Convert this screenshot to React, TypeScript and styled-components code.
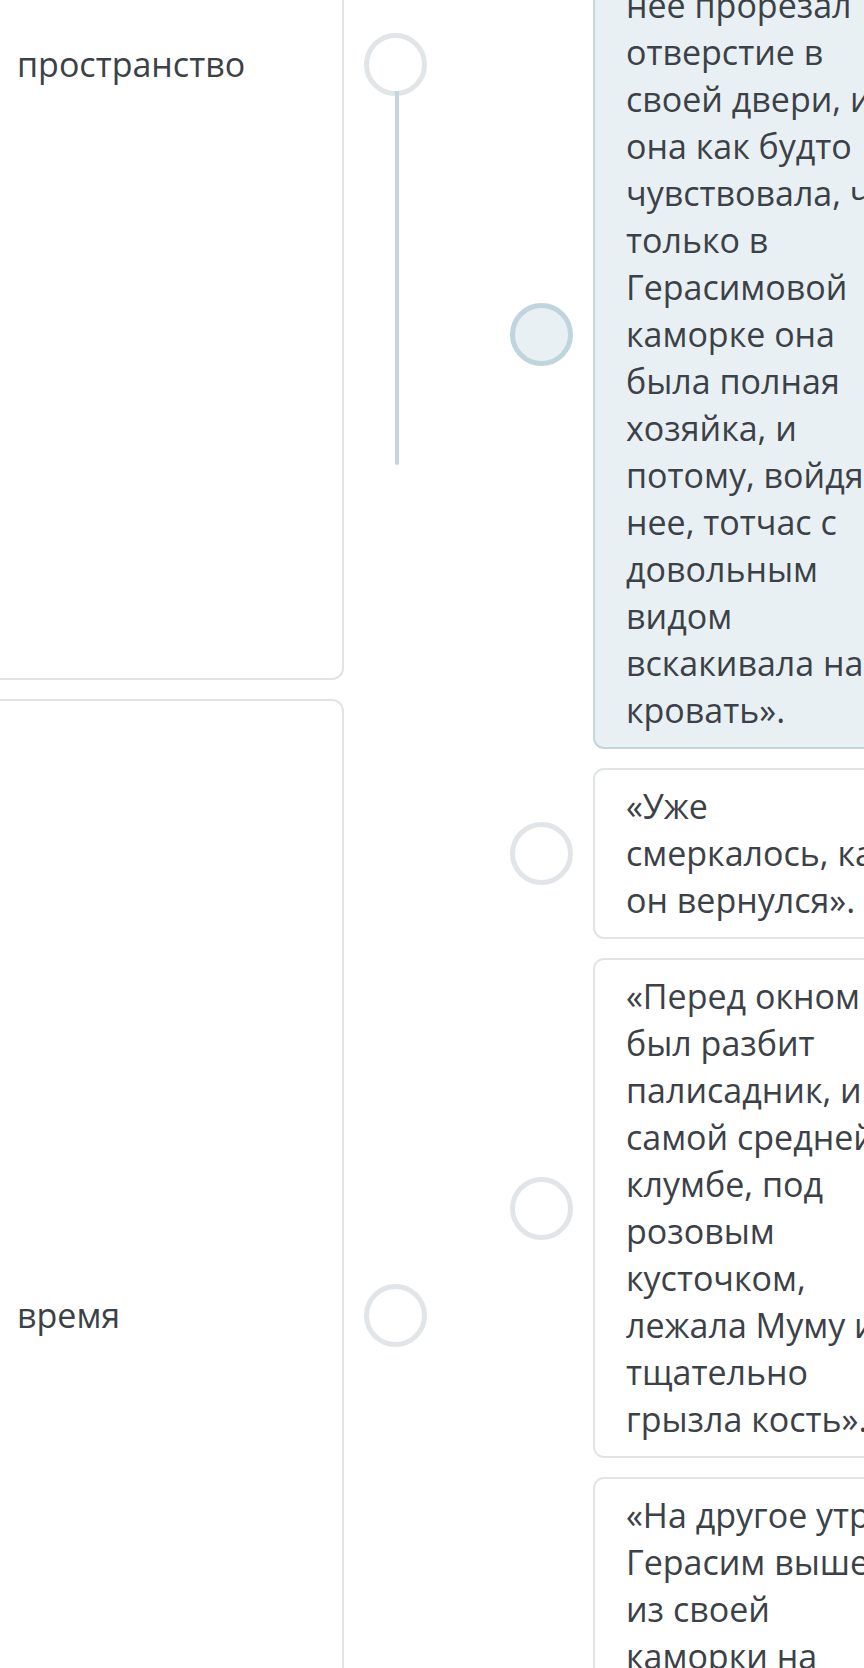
import styled, { createGlobalStyle } from 'styled-components';

const GlobalStyle = createGlobalStyle`
  html, body {
    margin: 0;
    padding: 0;
    background: #ffffff;
    overflow: hidden;
  }
  body {
    width: 864px;
    height: 1668px;
    font-family: 'Open Sans', 'Noto Sans', sans-serif;
    color: #3b4147;
  }
`;

const Viewport = styled.div`
  width: 864px;
  height: 1668px;
  overflow: hidden;
`;

// the exercise is scrolled, so the board starts above the visible area
const Board = styled.div`
  display: flex;
  align-items: flex-start;
  margin-top: -552px;
  margin-left: -16px;
  gap: 83px;
`;

const Side = styled.div<{ $offset?: number }>`
  display: flex;
  flex-direction: column;
  gap: 19px;
  padding-top: ${(p) => p.$offset || 0}px;
  flex-shrink: 0;
`;

const Row = styled.div`
  display: flex;
  align-items: center;
  gap: 20px;
`;

const LabelCard = styled.div`
  box-sizing: border-box;
  width: 360px;
  min-height: 1232px;
  display: flex;
  align-items: center;
  padding: 0 20px 0 31px;
  border: 2px solid #e0e4e7;
  border-radius: 12px;
  background: #fff;
  font-size: 34px;
  line-height: 47px;
`;

const AnswerCard = styled.div<{ $active?: boolean }>`
  box-sizing: border-box;
  width: 460px;
  padding: 13px 20px 13px 31px;
  border: 2px solid ${(p) => (p.$active ? '#c3d5de' : '#e2e5e8')};
  border-radius: 11px;
  background: ${(p) => (p.$active ? '#e9f0f4' : '#ffffff')};
  font-size: 34px;
  line-height: 47px;
  white-space: nowrap;
`;

const Dot = styled.div<{ $active?: boolean }>`
  position: relative;
  box-sizing: border-box;
  width: 63px;
  height: 63px;
  flex-shrink: 0;
  border-radius: 50%;
  border: 5px solid ${(p) => (p.$active ? '#c0d4dd' : '#e1e5e8')};
  background: ${(p) => (p.$active ? '#e9f0f4' : '#ffffff')};
`;

// connection line being dragged out of a dot
const Wire = styled.div<{ $length: number }>`
  position: absolute;
  top: 100%;
  left: 50%;
  width: 4px;
  margin-left: -1px;
  height: ${(p) => p.$length}px;
  background: #c3d5de;
  border-radius: 0 0 2px 2px;
`;

const labels = ['пространство', 'время'];

const answers: { lines: string[]; active?: boolean }[] = [
  {
    active: true,
    lines: [
      'Герасиму, он для',
      'нее прорезал',
      'отверстие в',
      'своей двери, и',
      'она как будто',
      'чувствовала, что',
      'только в',
      'Герасимовой',
      'каморке она',
      'была полная',
      'хозяйка, и',
      'потому, войдя в',
      'нее, тотчас с',
      'довольным',
      'видом',
      'вскакивала на',
      'кровать».',
    ],
  },
  { lines: ['«Уже', 'смеркалось, как', 'он вернулся».'] },
  {
    lines: [
      '«Перед окном',
      'был разбит',
      'палисадник, и на',
      'самой средней',
      'клумбе, под',
      'розовым',
      'кусточком,',
      'лежала Муму и',
      'тщательно',
      'грызла кость».',
    ],
  },
  {
    lines: [
      '«На другое утро',
      'Герасим вышел',
      'из своей',
      'каморки на',
      'двор и',
      'отправился',
      'вместе с Муму',
      'к реке, на',
      'самый берег».',
    ],
  },
];

export default function App() {
  return (
    <Viewport>
      <GlobalStyle />
      <Board>
        <Side>
          {labels.map((label, i) => (
            <Row key={label}>
              <LabelCard>{label}</LabelCard>
              <Dot>{i === 0 && <Wire $length={374} />}</Dot>
            </Row>
          ))}
        </Side>
        <Side $offset={472}>
          {answers.map((a, i) => (
            <Row key={i}>
              <Dot $active={a.active} />
              <AnswerCard $active={a.active}>
                {a.lines.map((line, j) => (
                  <div key={j}>{line}</div>
                ))}
              </AnswerCard>
            </Row>
          ))}
        </Side>
      </Board>
    </Viewport>
  );
}
